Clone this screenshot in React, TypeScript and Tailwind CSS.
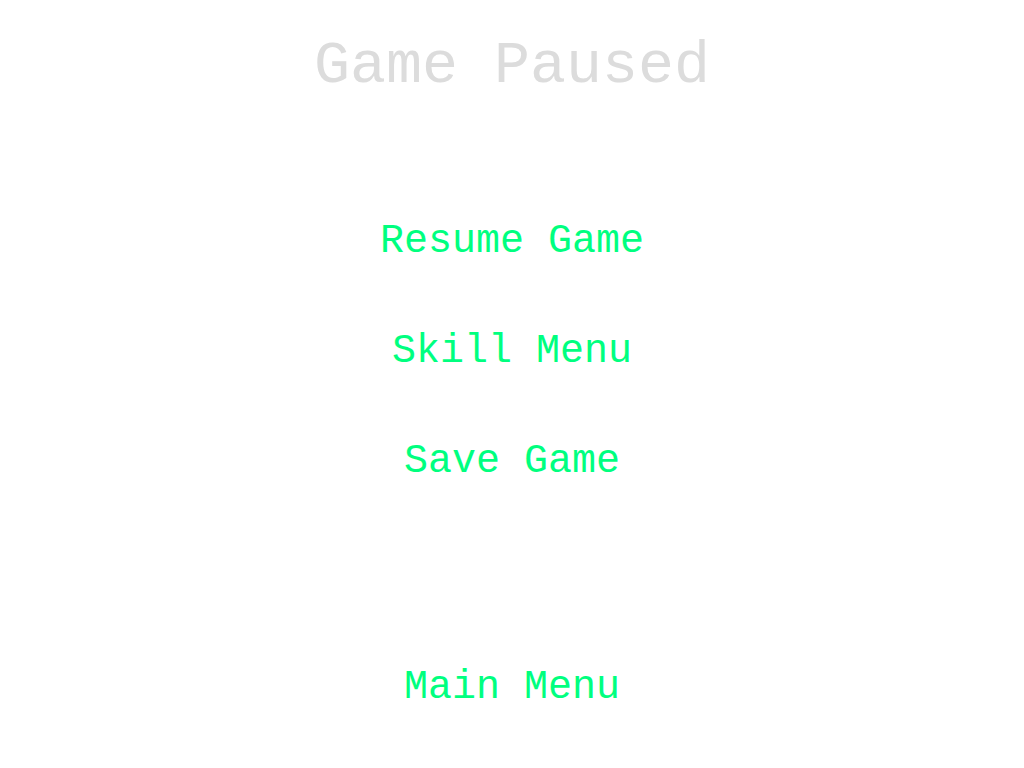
export default function App() {
  const items = ['Resume Game', 'Skill Menu', 'Save Game'];

  return (
    <div className="w-[1024px] h-[768px] bg-white flex flex-col items-center font-['Courier_New',Courier,'Nimbus_Mono_PS',FreeMono,monospace]">
      <h1 className="mt-[32px] text-[60px] leading-[68px] text-[#dcdcdc]">Game Paused</h1>
      <div className="mt-[122px] flex flex-col items-center gap-[70px]">
        {items.map(item => (
          <button key={item} className="text-[40px] leading-[40px] text-[#00ff7f]">
            {item}
          </button>
        ))}
      </div>
      <button className="mt-[186px] text-[40px] leading-[40px] text-[#00ff7f]">Main Menu</button>
    </div>
  );
}
